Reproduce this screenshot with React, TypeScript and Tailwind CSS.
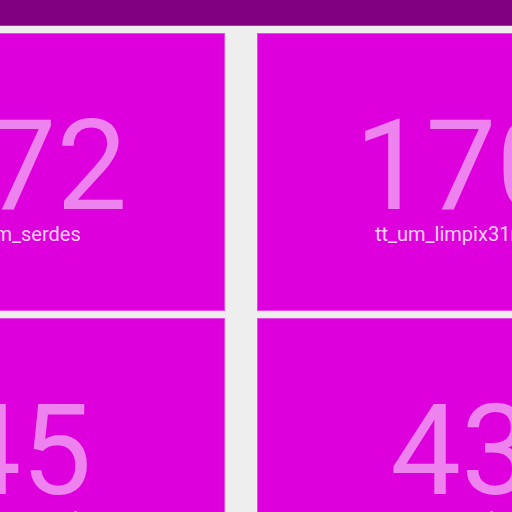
import React from "react";

const tiles = [
  { n: "172", label: "tt_um_serdes" },
  { n: "170", label: "tt_um_limpix31r_v2" },
  { n: "45", label: "tt_um_example" },
  { n: "43", label: "tt_um_project" },
];

export default function App() {
  return (
    <div className="w-[512px] h-[512px] overflow-hidden bg-[#eeeeee]" style={{ fontFamily: "Roboto, 'Liberation Sans', sans-serif" }}>
      <div className="h-[26px] bg-[#800080] border-b border-[#9a3a9a]" />
      <div className="ml-[-183px] mt-[7px] grid grid-cols-[408px_408px] gap-x-[32px] gap-y-[7px] w-[848px]">
        {tiles.map((t) => (
          <div key={t.n} className="h-[278px] bg-[#dd00dd] border border-[#ea4aea] flex flex-col items-center pt-[69px]">
            <div className="text-[126px] leading-none text-[#ee82ee] font-normal whitespace-nowrap">{t.n}</div>
            <div className="text-[20px] leading-none text-[#ffd0ff] mt-[-5px] whitespace-nowrap">{t.label}</div>
          </div>
        ))}
      </div>
    </div>
  );
}
